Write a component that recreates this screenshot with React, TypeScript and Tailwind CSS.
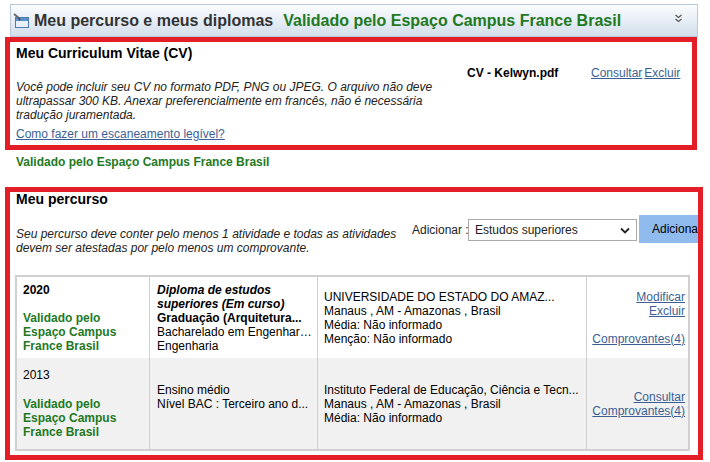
import React from "react";

const green = "text-[#22791f]";
const link = "text-[#3b5f94] underline";

function HeaderIcon() {
  return (
    <svg width="18" height="16" viewBox="0 0 18 16" className="shrink-0">
      <rect x="2.5" y="4.5" width="13" height="10" fill="#ffffff" stroke="#4a7bb5" />
      <rect x="3" y="5" width="12" height="3" fill="#5b8fd0" />
      <rect x="3" y="8" width="12" height="6" fill="#e8f0fa" />
      <path d="M1 1 L7 6" stroke="#6b6b6b" strokeWidth="2" />
      <path d="M5 4 L8 7 L6 7.5 Z" fill="#444" />
    </svg>
  );
}

function DoubleChevron() {
  return (
    <svg width="9" height="9" viewBox="0 0 9 9">
      <path d="M1.5 1 L4.5 3.5 L7.5 1" fill="none" stroke="#555" strokeWidth="1.2" />
      <path d="M1.5 5 L4.5 7.5 L7.5 5" fill="none" stroke="#555" strokeWidth="1.2" />
    </svg>
  );
}

function Validado() {
  return (
    <div className={`font-bold ${green}`}>
      Validado pelo
      <br />
      Espaço Campus
      <br />
      France Brasil
    </div>
  );
}

export default function App() {
  return (
    <div
      className="w-[710px] h-[462px] bg-white text-[12px] leading-[14px] text-[#222] overflow-hidden pt-[4px] pl-[5px]"
      style={{ fontFamily: '"Liberation Sans", Arial, sans-serif' }}
    >
      {/* header bar */}
      <div className="ml-[5px] w-[688px] h-[33px] border border-[#b9c9da] bg-gradient-to-b from-[#fbfdff] to-[#d3dfeb] flex items-center pl-[2px] pr-[14px]">
        <HeaderIcon />
        <span className="ml-[3px] text-[16px] leading-[18px] font-bold text-[#333]">Meu percurso e meus diplomas</span>
        <span className={`ml-[10px] text-[16px] leading-[18px] font-bold ${green}`}>
          Validado pelo Espaço Campus France Brasil
        </span>
        <span className="ml-auto -mt-[4px]">
          <DoubleChevron />
        </span>
      </div>

      {/* CV */}
      <div className="w-[692px] h-[113px] border-[5px] border-[#e41e26] flex">
        <div className="w-[457px] pl-[6px]">
          <div className="mt-[3px] text-[14px] leading-[16px] font-bold text-black">Meu Curriculum Vitae (CV)</div>
          <p className="mt-[19px] italic whitespace-nowrap">
            Você pode incluir seu CV no formato PDF, PNG ou JPEG. O arquivo não deve
            <br />
            ultrapassar 300 KB. Anexar preferencialmente em francês, não é necessária
            <br />
            tradução juramentada.
          </p>
          <a className={`block mt-[5px] ${link}`}>Como fazer um escaneamento legível?</a>
        </div>
        <div className="w-[124px] mt-[24px] font-bold text-black">CV - Kelwyn.pdf</div>
        <div className="mt-[24px] flex gap-[2px]">
          <a className={link}>Consultar</a>
          <a className={link}>Excluir</a>
        </div>
      </div>

      <div className={`mt-[5px] ml-[11px] font-bold ${green}`}>Validado pelo Espaço Campus France Brasil</div>

      {/* percurso */}
      <div className="mt-[18px] w-[698px] h-[273px] border-[5px] border-[#e41e26] overflow-hidden">
        <div className="pl-[6px] -mt-[1px] text-[14px] leading-[16px] font-bold text-black">Meu percurso</div>
        <div className="mt-[8px] flex items-start">
          <p className="ml-[6px] w-[396px] shrink-0 mt-[12px] italic whitespace-nowrap">
            Seu percurso deve conter pelo menos 1 atividade e todas as atividades
            <br />
            devem ser atestadas por pelo menos um comprovante.
          </p>
          <span className="mt-[8px] w-[56px] shrink-0 whitespace-nowrap">Adicionar :</span>
          <div className="mt-[4px] w-[169px] shrink-0 h-[22px] border border-[#a9a9a9] bg-white flex items-center pl-[6px] pr-[6px]">
            <span>Estudos superiores</span>
            <svg width="10" height="7" viewBox="0 0 10 7" className="ml-auto">
              <path d="M1 1.5 L5 5.5 L9 1.5" fill="none" stroke="#222" strokeWidth="1.8" />
            </svg>
          </div>
          <div className="ml-[2px] w-[70px] shrink-0 h-[28px] overflow-hidden">
            <div className="w-[90px] h-[28px] bg-[#8fbbee] pl-[13px] flex items-center whitespace-nowrap text-black">
              Adicionar
            </div>
          </div>
        </div>

        {/* table */}
        <div className="mt-[20px] ml-[5px] w-[675px] border-2 border-[#d0d0d0]">
          <div className="grid grid-cols-[133px_168px_269px_101px] h-[81px] bg-white">
            <div className="border-r border-[#cfcfcf] pl-[6px] flex flex-col justify-center">
              <div className="font-bold text-black">2020</div>
              <div className="h-[14px]" />
              <Validado />
            </div>
            <div className="border-r border-[#cfcfcf] pl-[7px] flex flex-col justify-center whitespace-nowrap text-black">
              <div className="font-bold italic">Diploma de estudos</div>
              <div className="font-bold italic">superiores (Em curso)</div>
              <div className="font-bold">Graduação (Arquitetura...</div>
              <div>Bacharelado em Engenhar…</div>
              <div>Engenharia</div>
            </div>
            <div className="border-r border-[#cfcfcf] pl-[6px] flex flex-col justify-center whitespace-nowrap text-black">
              <div>UNIVERSIDADE DO ESTADO DO AMAZ...</div>
              <div>Manaus , AM - Amazonas , Brasil</div>
              <div>Média: Não informado</div>
              <div>Menção: Não informado</div>
            </div>
            <div className="pr-[3px] flex flex-col justify-center items-end">
              <a className={link}>Modificar</a>
              <a className={link}>Excluir</a>
              <div className="h-[14px]" />
              <a className={link}>Comprovantes(4)</a>
            </div>
          </div>
          <div className="grid grid-cols-[133px_168px_269px_101px] h-[91px] bg-[#f1f1f1]">
            <div className="border-r border-[#cfcfcf] pl-[6px] flex flex-col justify-center">
              <div className="text-black">2013</div>
              <div className="h-[15px]" />
              <Validado />
            </div>
            <div className="border-r border-[#cfcfcf] pl-[7px] flex flex-col justify-center whitespace-nowrap text-black">
              <div>Ensino médio</div>
              <div>Nível BAC : Terceiro ano d...</div>
              <div className="h-[14px]" />
            </div>
            <div className="border-r border-[#cfcfcf] pl-[6px] flex flex-col justify-center whitespace-nowrap text-black">
              <div>Instituto Federal de Educação, Ciência e Tecn...</div>
              <div>Manaus , AM - Amazonas , Brasil</div>
              <div>Média: Não informado</div>
            </div>
            <div className="pr-[3px] flex flex-col justify-center items-end">
              <a className={link}>Consultar</a>
              <a className={link}>Comprovantes(4)</a>
            </div>
          </div>
        </div>
      </div>
    </div>
  );
}
